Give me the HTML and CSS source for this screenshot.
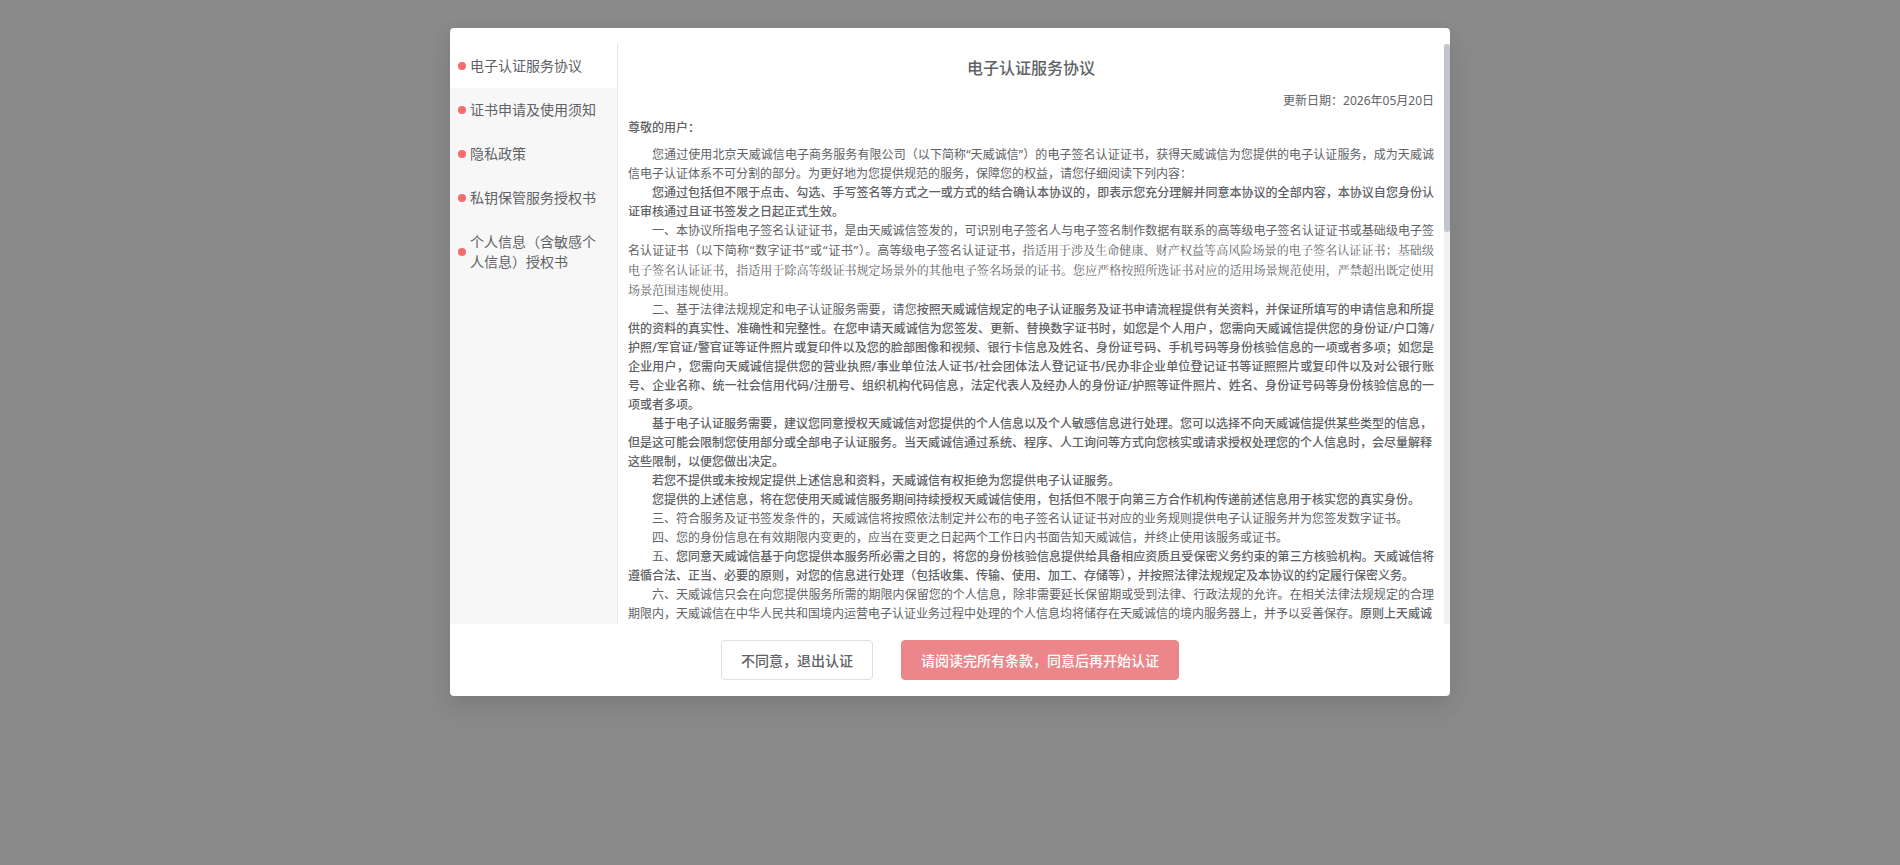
FILE: index.html
```html
<!DOCTYPE html>
<html lang="zh-CN">
<head>
    <meta charset="UTF-8">
    <meta name="viewport" content="width=device-width, initial-scale=1.0">
    <title>电子认证服务协议</title>
    <link rel="stylesheet" href="styles.css">
</head>
<body>
    <div class="overlay">
        <div class="dialog" role="dialog" aria-modal="true" aria-labelledby="agreementTitle">
            <div class="dialog-body">
                <nav class="tabs">
                    <button type="button" class="tab active"><span class="dot"></span><span>电子认证服务协议</span></button>
                    <button type="button" class="tab"><span class="dot"></span><span>证书申请及使用须知</span></button>
                    <button type="button" class="tab"><span class="dot"></span><span>隐私政策</span></button>
                    <button type="button" class="tab"><span class="dot"></span><span>私钥保管服务授权书</span></button>
                    <button type="button" class="tab"><span class="dot"></span><span>个人信息（含敏感个人信息）授权书</span></button>
                </nav>

                <div class="content">
                    <article class="agreement">
                        <h1 id="agreementTitle">电子认证服务协议</h1>
                        <p class="date">更新日期：2026年05月20日</p>
                        <p class="greeting">尊敬的用户：</p>
                        <p>您通过使用北京天威诚信电子商务服务有限公司（以下简称“天威诚信”）的电子签名认证证书，获得天威诚信为您提供的电子认证服务，成为天威诚信电子认证体系不可分割的部分。为更好地为您提供规范的服务，保障您的权益，请您仔细阅读下列内容：</p>
                        <p><strong>您通过包括但不限于点击、勾选、手写签名等方式之一或方式的结合确认本协议的，即表示您充分理解并同意本协议的全部内容，本协议自您身份认证审核通过且证书签发之日起正式生效。</strong></p>
                        <p>一、本协议所指电子签名认证证书，是由天威诚信签发的，可识别电子签名人与电子签名制作数据有联系的高等级电子签名认证证书或基础级电子签名认证证书（以下简称<span class="quoted">“数字证书”或“证书”</span>）。高等级电子签名认证证书，<span class="song">指适用于涉及生命健康、财产权益等高风险场景的电子签名认证证书；基础级电子签名认证证书，指适用于除高等级证书规定场景外的其他电子签名场景的证书。您应严格按照所选证书对应的适用场景规范使用，严禁超出既定使用场景范围违规使用。</span></p>
                        <p>二、基于法律法规规定和电子认证服务需要，请您<strong>按照天威诚信规定的电子认证服务及证书申请流程提供有关资料，并保证所填写的申请信息和所提供的资料的真实性、准确性和完整性。在您申请天威诚信为您签发、更新、替换数字证书时，如您是个人用户，您需向天威诚信提供您的身份证/户口簿/护照/军官证/警官证等证件照片或复印件以及您的脸部图像和视频、银行卡信息及姓名、身份证号码、手机号码等身份核验信息的一项或者多项；如您是企业用户，您需向天威诚信提供您的营业执照/事业单位法人证书/社会团体法人登记证书/民办非企业单位登记证书等证照照片或复印件以及对公银行账号、企业名称、统一社会信用代码/注册号、组织机构代码信息，法定代表人及经办人的身份证/护照等证件照片、姓名、身份证号码等身份核验信息的一项或者多项。</strong></p>
                        <p class="left"><strong>基于电子认证服务需要，建议您同意授权天威诚信对您提供的个人信息以及个人敏感信息进行处理。您可以选择不向天威诚信提供某些类型的信息，但是这可能会限制您使用部分或全部电子认证服务。当天威诚信通过系统、程序、人工询问等方式向您核实或请求授权处理您的个人信息时，会尽量解释这些限制，以便您做出决定。</strong></p>
                        <p><strong>若您不提供或未按规定提供上述信息和资料，天威诚信有权拒绝为您提供电子认证服务。</strong></p>
                        <p><strong>您提供的上述信息，将在您使用天威诚信服务期间持续授权天威诚信使用，包括但不限于向第三方合作机构传递前述信息用于核实您的真实身份。</strong></p>
                        <p>三、符合服务及证书签发条件的，天威诚信将按照依法制定并公布的电子签名认证证书对应的业务规则提供电子认证服务并为您签发数字证书。</p>
                        <p>四、您的身份信息在有效期限内变更的，应当在变更之日起两个工作日内书面告知天威诚信，并终止使用该服务或证书。</p>
                        <p>五、<strong>您同意天威诚信基于向您提供本服务所必需之目的，将您的身份核验信息提供给具备相应资质且受保密义务约束的第三方核验机构。天威诚信将遵循合法、正当、必要的原则，对您的信息进行处理（包括收集、传输、使用、加工、存储等），并按照法律法规规定及本协议的约定履行保密义务。</strong></p>
                        <p>六、天威诚信只会在向您提供服务所需的期限内保留您的个人信息，除非需要延长保留期或受到法律、行政法规的允许。在相关法律法规规定的合理期限内，天威诚信在中华人民共和国境内运营电子认证业务过程中处理的个人信息均将储存在天威诚信的境内服务器上，并予以妥善保存。<strong>原则上天威诚</strong></p>
                    </article>
                    <div class="scrollbar"><div class="thumb"></div></div>
                </div>
            </div>

            <div class="dialog-footer">
                <button type="button" class="button">不同意，退出认证</button>
                <button type="button" class="button primary">请阅读完所有条款，同意后再开始认证</button>
            </div>
        </div>
    </div>
</body>
</html>
```

FILE: styles.css
```css
* {
    box-sizing: border-box;
}
body {
    margin: 0;
    font-family: "Noto Sans", "Noto Sans CJK SC", sans-serif;
    color: #606266;
    background-color: #8a8a8a;
}
.overlay {
    min-height: 100vh;
    padding: 28px 20px;
}
.dialog {
    max-width: 1000px;
    margin: 0 auto;
    padding-top: 16px;
    background-color: #fff;
    border-radius: 4px;
    box-shadow: 0 12px 32px 4px rgba(0, 0, 0, 0.04), 0 8px 20px rgba(0, 0, 0, 0.08);
}
.dialog-body {
    display: flex;
    height: 580px;
}

/* 左侧协议列表 */
.tabs {
    flex: 0 0 168px;
    background-color: #f7f7f7;
    border-right: 1px solid #e4e7ed;
}
.tab {
    display: flex;
    align-items: center;
    gap: 4px;
    width: 100%;
    padding: 12px 20px 12px 8px;
    border: none;
    background: none;
    color: inherit;
    font-family: inherit;
    font-size: 14px;
    line-height: 20px;
    text-align: left;
    cursor: pointer;
}
.tab.active {
    background-color: #fff;
}
.dot {
    flex: none;
    width: 8px;
    height: 8px;
    border-radius: 50%;
    background-color: #f56c6c;
}

/* 协议正文 */
.content {
    position: relative;
    flex: 1;
    min-width: 0;
    overflow: hidden;
}
.agreement {
    padding: 12px 16px 0 10px;
    font-size: 12px;
    line-height: 19px;
}
.agreement h1 {
    margin: 0 0 11px;
    font-size: 16px;
    font-weight: 500;
    line-height: 24px;
    text-align: center;
}
.agreement p {
    margin: 0;
    text-indent: 2em;
    text-align: justify;
}
.agreement .date {
    margin-bottom: 8px;
    text-align: right;
}
.agreement .greeting {
    margin-bottom: 8px;
    font-weight: 500;
    text-indent: 0;
}
.agreement .left {
    text-align: left;
}
.agreement strong {
    font-weight: 500;
}
.quoted {
    font-family: "DejaVu Sans", "Noto Sans CJK SC", sans-serif;
    line-height: 16px;
}
.song {
    font-family: "Noto Serif CJK SC", "Liberation Serif", serif;
    line-height: 20px;
}
.scrollbar {
    position: absolute;
    top: 0;
    right: 0;
    bottom: 0;
    width: 6px;
    background-color: #f1f1f1;
}
.thumb {
    height: 188px;
    border-radius: 3px;
    background-color: #c0c4cc;
}

.dialog-footer {
    display: flex;
    justify-content: center;
    gap: 28px;
    padding: 16px;
}
.button {
    height: 40px;
    padding: 0 19px;
    border: 1px solid #dcdfe6;
    border-radius: 4px;
    background-color: #fff;
    color: #606266;
    font-family: inherit;
    font-size: 14px;
    font-weight: 500;
    cursor: pointer;
}
.button.primary {
    border-color: #eb868a;
    background-color: #eb868a;
    color: #fff;
}
```
